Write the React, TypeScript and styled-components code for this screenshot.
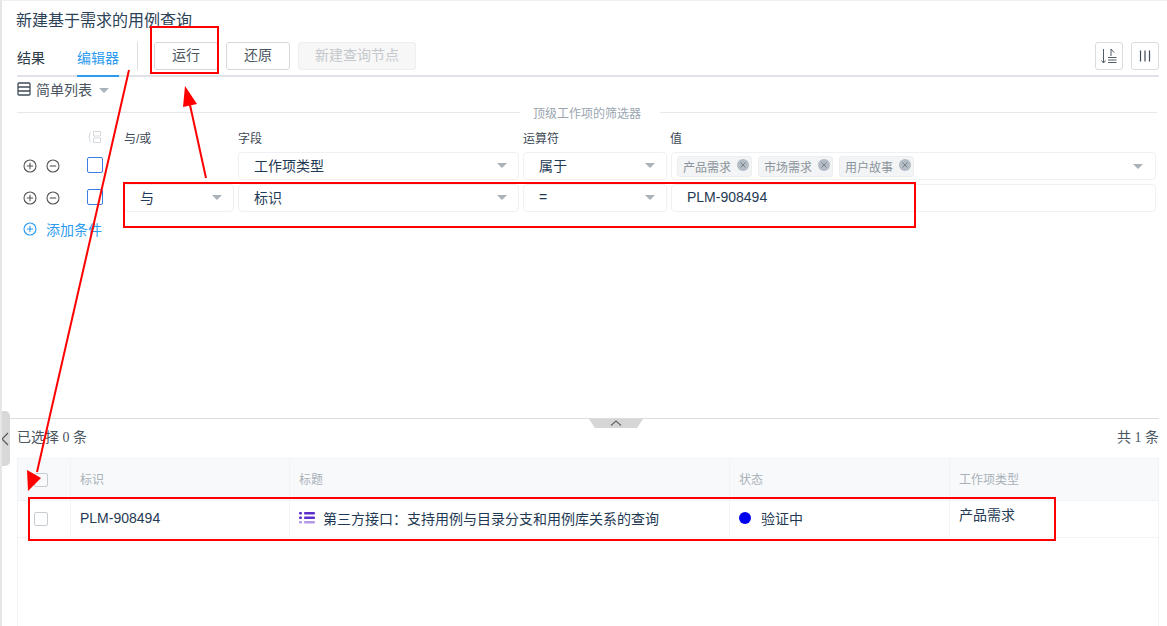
import React from "react";
import styled, { createGlobalStyle } from "styled-components";

const Global = createGlobalStyle`
  html, body { margin: 0; padding: 0; background: #fff; }
  body { font-family: "Liberation Sans", "Noto Sans CJK SC", sans-serif; color: #1f3a54; }
  * { box-sizing: border-box; }
`;

const Page = styled.div`
  position: relative;
  width: 1167px;
  height: 626px;
  overflow: hidden;
  background: #fff;
  border-left: 2px solid #e6e6e6;
  border-top: 1px solid #f0f0f0;
  display: flex;
  flex-direction: column;
`;
const Top = styled.div`
  height: 417px;
  padding: 0 8px 0 15px;
  flex: none;
`;
const Title = styled.div`
  font-size: 16px;
  line-height: 22px;
  height: 41px;
  padding-top: 9px;
  margin-left: -1px;
  color: #2c4358;
`;
const TabBar = styled.div`
  display: flex;
  align-items: flex-start;
  height: 35px;
  border-bottom: 2px solid #dfe3e8;
`;
const Tab = styled.div<{ $active?: boolean }>`
  font-size: 14px;
  line-height: 20px;
  height: 35px;
  padding-top: 6px;
  margin-right: ${(p) => (p.$active ? "18px" : "32px")};
  color: ${(p) => (p.$active ? "#2d9bf0" : "#2b3a47")};
  border-bottom: 2px solid ${(p) => (p.$active ? "#2d9bf0" : "transparent")};
`;
const VLine = styled.div`
  width: 1px;
  height: 28px;
  background: #dcdfe3;
  margin-right: 16px;
`;
const Btn = styled.div<{ $disabled?: boolean; $w: number }>`
  width: ${(p) => p.$w}px;
  height: 28px;
  margin-right: 8px;
  padding-bottom: 4px;
  display: flex;
  align-items: center;
  justify-content: center;
  font-size: 14px;
  border-radius: 3px;
  color: ${(p) => (p.$disabled ? "#c4c8cc" : "#4a5560")};
  background: ${(p) => (p.$disabled ? "#f7f7f7" : "#fff")};
  border: 1px solid ${(p) => (p.$disabled ? "#eeeeee" : "#d5d8dc")};
`;
const Spacer = styled.div`
  flex: 1;
`;
const IconBtn = styled.div`
  width: 28px;
  height: 28px;
  margin-left: 8px;
  border: 1px solid #d9dce0;
  border-radius: 3px;
  display: flex;
  align-items: center;
  justify-content: center;
`;
const ViewRow = styled.div`
  display: flex;
  align-items: center;
  height: 24px;
  padding-bottom: 1px;
  font-size: 14px;
  color: #4a5560;
  gap: 5px;
`;
const Caret = styled.span<{ $ml?: number; $mt?: number }>`
  display: inline-block;
  width: 0;
  height: 0;
  margin-left: ${(p) => p.$ml ?? 0}px;
  margin-top: ${(p) => p.$mt ?? 0}px;
  border-left: 5px solid transparent;
  border-right: 5px solid transparent;
  border-top: 5px solid #a9b1b9;
  flex: none;
`;
const SectionDivider = styled.div`
  display: flex;
  align-items: center;
  height: 16px;
  margin-top: 3px;
  font-size: 12px;
  color: #9aa5b0;
  width: 1140px;
  &::before, &::after { content: ""; height: 1px; background: #e6e8eb; }
  &::before { width: 503px; margin-right: 13px; }
  &::after { flex: 1; margin-left: 19px; }
`;
const Grid = styled.div`
  display: grid;
  grid-template-columns: 103px 110px 281px 144px 485px;
  column-gap: 4px;
  width: 1139px;
`;
const HeadRow = styled(Grid)`
  height: 20px;
  margin-top: 8px;
  margin-bottom: 4px;
  padding-bottom: 2px;
  align-items: center;
  font-size: 12px;
  color: #3d4a56;
`;
const Row = styled(Grid)`
  height: 28px;
  margin-bottom: 4px;
`;
const Lead = styled.div`
  display: flex;
  align-items: center;
  padding-left: 6px;
`;
const RoundIcon = styled.svg`
  width: 14px;
  height: 14px;
  margin-right: 9px;
  flex: none;
`;
const Check = styled.div`
  width: 16px;
  height: 16px;
  margin-left: 18px;
  margin-top: -2px;
  border: 1px solid #3b7de0;
  border-radius: 2px;
`;
const HeadIcon = styled.svg`
  width: 14px;
  height: 14px;
  margin-left: 65px;
`;
const ValueLabel = styled.div`
  margin-left: -1px;
`;
const Field = styled.div`
  height: 28px;
  border: 1px solid #eef0f2;
  border-radius: 4px;
  padding: 0 11px 2px 15px;
  display: flex;
  align-items: center;
  justify-content: space-between;
  font-size: 14px;
  color: #1f3a54;
`;
const TagField = styled(Field)`
  padding: 0 12px 0 5px;
`;
const Tags = styled.div`
  display: flex;
  gap: 6px;
`;
const Tag = styled.div`
  height: 21px;
  width: 75px;
  padding: 0 5px;
  background: #f3f4f5;
  border: 1px solid #eceef0;
  border-radius: 3px;
  font-size: 12px;
  color: #8b949c;
  display: flex;
  align-items: center;
  justify-content: space-between;
`;
const TagClose = styled.svg`
  width: 12px;
  height: 12px;
  margin-top: -2px;
  margin-right: -3px;
`;
const AddRow = styled.div`
  display: flex;
  align-items: center;
  height: 20px;
  margin-top: 7px;
  padding-left: 6px;
  font-size: 14px;
  color: #2d9bf0;
`;
const Splitter = styled.div`
  position: relative;
  margin-right: 8px;
  height: 1px;
  background: #dcdcdc;
  flex: none;
`;
const SplitHandle = styled.div`
  position: absolute;
  left: 587px;
  top: 1px;
  width: 54px;
  height: 9px;
  background: #d6d6d6;
  clip-path: polygon(0 0, 100% 0, 89% 100%, 11% 100%);
  display: flex;
  justify-content: center;
`;
const SideHandle = styled.div`
  position: absolute;
  left: -2px;
  top: 410px;
  width: 10px;
  height: 55px;
  background: #d8d8d8;
  border-radius: 0 5px 5px 0;
  display: flex;
  align-items: center;
  padding-left: 1px;
`;
const Bottom = styled.div`
  padding: 0 8px 0 15px;
  flex: 1;
  display: flex;
  flex-direction: column;
`;
const Summary = styled.div`
  display: flex;
  justify-content: space-between;
  align-items: center;
  height: 33px;
  margin-bottom: 6px;
  font-family: "Liberation Serif", "Noto Sans CJK SC", serif;
  font-size: 14px;
  color: #4a5560;
`;
const Table = styled.div`
  flex: 1;
  border: 1px solid #f1f3f5;
  border-bottom: 0;
`;
const TRow = styled.div<{ $head?: boolean }>`
  display: grid;
  grid-template-columns: 52px 219px 440px 220px 1fr;
  height: ${(p) => (p.$head ? "42px" : "37px")};
  background: ${(p) => (p.$head ? "#f8f9fb" : "#fff")};
  border-bottom: 1px solid #f1f3f5;
`;
const Cell = styled.div<{ $head?: boolean; $up?: boolean }>`
  display: flex;
  align-items: ${(p) => (p.$up ? "flex-start" : "center")};
  padding: ${(p) => (p.$up ? "3px 9px 0" : "0 9px 2px")};
  border-left: 1px solid #f1f3f5;
  font-size: ${(p) => (p.$head ? "12px" : "14px")};
  color: ${(p) => (p.$head ? "#a9b1b9" : "#1f3a54")};
  &:first-child { border-left: 0; padding: 0 0 0 16px; }
`;
const Box = styled.div`
  width: 14px;
  height: 14px;
  border: 1px solid #c6ccd2;
  border-radius: 2px;
`;
const Dot = styled.span`
  width: 12px;
  height: 12px;
  border-radius: 50%;
  background: #0000f0;
  margin-right: 10px;
  flex: none;
`;
const ListIcon = styled.svg`
  width: 16px;
  height: 14px;
  margin-right: 8px;
  flex: none;
`;
const Annotations = styled.svg`
  position: absolute;
  left: -2px;
  top: -1px;
  width: 1167px;
  height: 626px;
  pointer-events: none;
`;

const Plus = ({ color = "#555" }: { color?: string }) => (
  <RoundIcon viewBox="0 0 14 14" fill="none" stroke={color} strokeWidth="1.1">
    <circle cx="7" cy="7" r="6" />
    <path d="M3.8 7h6.4M7 3.8v6.4" />
  </RoundIcon>
);
const Minus = () => (
  <RoundIcon viewBox="0 0 14 14" fill="none" stroke="#555" strokeWidth="1.1">
    <circle cx="7" cy="7" r="6" />
    <path d="M3.8 7h6.4" />
  </RoundIcon>
);
const X = () => (
  <TagClose viewBox="0 0 12 12">
    <circle cx="6" cy="6" r="6" fill="#b4bcc5" />
    <path d="M3.5 3.5l5 5M8.5 3.5l-5 5" stroke="#6f7a85" strokeWidth="0.9" />
  </TagClose>
);

export default function App() {
  return (
    <>
      <Global />
      <Page>
        <Top>
          <Title>新建基于需求的用例查询</Title>
          <TabBar>
            <Tab>结果</Tab>
            <Tab $active>编辑器</Tab>
            <VLine />
            <Btn $w={64}>运行</Btn>
            <Btn $w={64}>还原</Btn>
            <Btn $w={118} $disabled>新建查询节点</Btn>
            <Spacer />
            <IconBtn>
              <svg width="18" height="18" viewBox="0 0 18 18" fill="none" stroke="#3f4c58" strokeWidth="0.9">
                <path d="M3.500 2v14M1.500 13.500l2 2.500 2-2.500M11 9V2l3 3.500" />
                <path d="M8 10.500h8.500M8 13h8.500M8 15.500h8.500" />
              </svg>
            </IconBtn>
            <IconBtn>
              <svg width="14" height="14" viewBox="0 0 14 14" fill="none" stroke="#3f4c58" strokeWidth="1.2">
                <path d="M2.500 1.500v11M7 1.500v11M11.500 1.500v11" />
              </svg>
            </IconBtn>
          </TabBar>
          <ViewRow>
            <svg width="14" height="14" viewBox="0 0 14 14" fill="none" stroke="#3f4c58" strokeWidth="1.3">
              <rect x="1" y="1" width="12" height="12" rx="1" />
              <path d="M1 5h12M1 9h12" />
            </svg>
            简单列表
            <Caret $ml={2} $mt={3} />
          </ViewRow>
          <SectionDivider>顶级工作项的筛选器</SectionDivider>
          <HeadRow>
            <Lead>
              <HeadIcon viewBox="0 0 14 14" fill="none" stroke="#d5d9dd" strokeWidth="1">
                <path d="M3 1.500C1.500 1.500 2 6 1 7c1 1 .500 5.500 2 5.500M5.500 1.500h7v4.500h-7zM5.500 8h7v4.500h-7z" />
              </HeadIcon>
            </Lead>
            <div>与/或</div>
            <div>字段</div>
            <div>运算符</div>
            <ValueLabel>值</ValueLabel>
          </HeadRow>
          <Row>
            <Lead><Plus /><Minus /><Check /></Lead>
            <div />
            <Field>工作项类型<Caret /></Field>
            <Field>属于<Caret /></Field>
            <TagField>
              <Tags>
                <Tag>产品需求<X /></Tag>
                <Tag>市场需求<X /></Tag>
                <Tag>用户故事<X /></Tag>
              </Tags>
              <Caret />
            </TagField>
          </Row>
          <Row>
            <Lead><Plus /><Minus /><Check /></Lead>
            <Field>与<Caret /></Field>
            <Field>标识<Caret /></Field>
            <Field>=<Caret /></Field>
            <Field>PLM-908494</Field>
          </Row>
          <AddRow>
            <Plus color="#2d9bf0" />
            <span>添加条件</span>
          </AddRow>
        </Top>
        <Splitter>
          <SplitHandle>
            <svg width="14" height="8" viewBox="0 0 14 8" fill="none" stroke="#666" strokeWidth="1.2">
              <path d="M2 6.500L7 2l5 4.500" />
            </svg>
          </SplitHandle>
        </Splitter>
        <Bottom>
          <Summary>
            <span>已选择 0 条</span>
            <span>共 1 条</span>
          </Summary>
          <Table>
            <TRow $head>
              <Cell $head><Box /></Cell>
              <Cell $head>标识</Cell>
              <Cell $head>标题</Cell>
              <Cell $head>状态</Cell>
              <Cell $head>工作项类型</Cell>
            </TRow>
            <TRow>
              <Cell><Box /></Cell>
              <Cell>PLM-908494</Cell>
              <Cell>
                <ListIcon viewBox="0 0 16 14">
                  <g fill="#5b2fc9">
                    <rect x="0" y="1" width="3" height="2.500" rx="1" />
                    <rect x="5" y="1" width="11" height="2.500" rx="1" />
                    <rect x="0" y="5.500" width="3" height="2.500" rx="1" />
                    <rect x="5" y="5.500" width="11" height="2.500" rx="1" />
                  </g>
                  <g fill="#b39ae8">
                    <rect x="0" y="10" width="3" height="2.500" rx="1" />
                    <rect x="5" y="10" width="11" height="2.500" rx="1" />
                  </g>
                </ListIcon>
                第三方接口：支持用例与目录分支和用例库关系的查询
              </Cell>
              <Cell><Dot />验证中</Cell>
              <Cell $up>产品需求</Cell>
            </TRow>
          </Table>
        </Bottom>
        <SideHandle>
          <svg width="8" height="14" viewBox="0 0 8 14" fill="none" stroke="#555" strokeWidth="1.2">
            <path d="M7 1L1 7l6 6" />
          </svg>
        </SideHandle>
        <Annotations viewBox="0 0 1167 626" fill="none" stroke="#f00" strokeWidth="2">
          <rect x="151" y="27" width="67" height="46" />
          <rect x="124" y="183" width="791" height="44" />
          <rect x="29" y="498" width="1026" height="42" />
          <path d="M129 70L37 472" />
          <path d="M206 178L190 105" />
          <polygon points="28,491 27,470 41,478" fill="#f00" stroke="none" />
          <polygon points="185,86 183,107 197,104" fill="#f00" stroke="none" />
        </Annotations>
      </Page>
    </>
  );
}
